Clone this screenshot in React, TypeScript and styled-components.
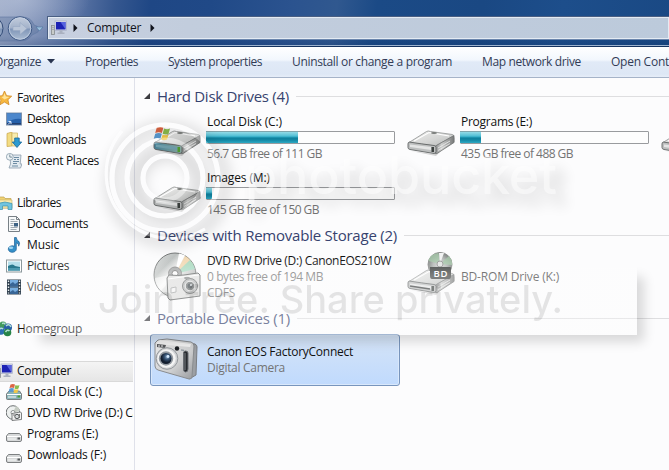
import React, { useLayoutEffect, useRef, useState } from 'react';
import styled, { createGlobalStyle } from 'styled-components';

const Global = createGlobalStyle`
  * { box-sizing: border-box; }
  html, body { margin: 0; padding: 0; overflow: hidden; }
  body { font: 12px/16px "Open Sans", "Noto Sans", sans-serif; color: #111; background: #fcfcfd; }
  svg { display: block; flex: none; }
`;

const Screen = styled.div`
  position: relative;
  width: 669px;
  height: 470px;
  overflow: hidden;
  display: flex;
  flex-direction: column;
  background: #fcfcfd;
`;

const TextBox = styled.span<{ $w: number }>`
  display: block;
  flex: none;
  width: ${p => p.$w}px;
  white-space: nowrap;
`;
const TextRun = styled.span`
  display: inline-block;
  white-space: nowrap;
`;

/* Single-line label whose tracking is adjusted to fill a given width. */
function Label({ text, w }: { text: string; w: number }) {
  const ref = useRef<HTMLSpanElement>(null);
  const [tracking, setTracking] = useState(0);
  useLayoutEffect(() => {
    if (ref.current) {
      const natural = ref.current.getBoundingClientRect().width;
      setTracking((w - natural) / text.length);
    }
  }, [text, w]);
  return (
    <TextBox $w={w}>
      <TextRun ref={ref} style={{ letterSpacing: tracking }}>{text}</TextRun>
    </TextBox>
  );
}

/* ---------- top chrome ---------- */
const Chrome = styled.header`
  flex: none;
  height: 46px;
  padding-top: 16px;
  display: flex;
  align-items: flex-start;
  border-bottom: 1px solid #9db3cf;
  background:
    radial-gradient(ellipse 70px 34px at 20px 0px, rgba(190, 200, 222, 0.55), transparent),
    linear-gradient(180deg, transparent 0 36px, rgba(10, 40, 90, 0.22) 46px),
    linear-gradient(97deg, #9aa8c5 0, #8193b8 35px, #5c75a5 75px, #35578f 115px, #1f4785 150px, #204987 210px, #2b538f 290px, #30588f 335px, #1b4a86 375px, #1a4883 480px, #1d4e8b 560px, #1a4984 100%);
`;
const NavSlot = styled.div`
  width: 47px;
  height: 26px;
  flex: none;
`;
const AddressBar = styled.div`
  flex: 1;
  height: 24px;
  display: flex;
  align-items: center;
  padding-left: 3px;
  border: 1px solid #4a5f83;
  border-bottom-color: #6b86ad;
  border-right: 0;
  box-shadow: inset 0 0 0 1px #e4ebf3;
  background: linear-gradient(90deg, #c8d0e0 0, #c2cddd 140px, #bccadb 100%);
`;
const Crumb = styled.div`
  display: flex;
  align-items: center;
  gap: 9px;
  margin-left: 6px;
  color: #10131c;
`;

const Toolbar = styled.nav`
  flex: none;
  height: 32px;
  display: flex;
  align-items: center;
  gap: 30px;
  padding-bottom: 1px;
  color: #323c56;
  border-top: 1px solid #14325f;
  border-bottom: 1px solid #a5b3c8;
  background: linear-gradient(180deg, #ffffff 0, #f2f7fd 13px, #e1eaf7 15px, #dde7f5 27px, #e6edf8 100%);
`;
const Command = styled.div`
  display: flex;
  align-items: center;
  gap: 6px;
  flex: none;
  &:first-child { margin-left: -6px; }
`;

/* ---------- body ---------- */
const Body = styled.div`
  flex: 1;
  min-height: 0;
  display: flex;
`;
const Sidebar = styled.aside`
  flex: none;
  width: 135px;
  padding-top: 10px;
  overflow: hidden;
  border-right: 1px solid #dfe1ea;
`;
const NavRow = styled.div<{ $level: number; $active?: boolean }>`
  height: 21px;
  width: 133px;
  overflow: hidden;
  display: flex;
  align-items: center;
  gap: ${p => (p.$level ? 5 : 4)}px;
  padding-left: ${p => (p.$level ? 6 : 0)}px;
  padding-bottom: 2px;
  ${p => (p.$level ? '' : 'svg { margin-left: -3px; }')}
  ${p => p.$active && 'background: linear-gradient(#f5f5f5, #e5e5e5); box-shadow: inset 0 1px #d9d9d9, inset 0 -1px #d9d9d9;'}
`;
const Gap = styled.div`height: 21px;`;

const Content = styled.main`
  flex: 1;
  min-width: 0;
  padding: 4px 0 0 9px;
  overflow: hidden;
`;
const GroupHeader = styled.h2<{ $h: number }>`
  margin: 0;
  height: ${p => p.$h}px;
  padding-bottom: 2px;
  display: flex;
  align-items: center;
  gap: 7px;
  font-size: 15px;
  line-height: 20px;
  font-weight: 400;
  color: #37436f;
`;
const Rule = styled.div`
  flex: 1;
  height: 1px;
  margin-top: 1px;
  background: #dedee0;
`;
const Tiles = styled.div`
  display: grid;
  grid-template-columns: repeat(3, 250px);
  grid-auto-rows: 52px;
  gap: 4px;
  padding-left: 6px;
`;
const TileBox = styled.div<{ $selected?: boolean }>`
  display: flex;
  align-items: center;
  border: 1px solid ${p => (p.$selected ? '#7895bd' : 'transparent')};
  border-radius: 3px;
  ${p => p.$selected && 'background: linear-gradient(#d5e4f7, #c0dafd); box-shadow: inset 0 0 0 1px #d9e8fb;'}
`;
const IconSlot = styled.div`
  width: 55px;
  padding-left: 1px;
  flex: none;
`;
const TileText = styled.div<{ $muted?: boolean }>`
  padding-left: 1px;
  color: ${p => (p.$muted ? '#444' : '#111')};
`;
const Detail = styled.div`color: #747474;`;
const Meter = styled.div`
  width: 189px;
  height: 13px;
  margin: 1px 0 2px -1px;
  border: 1px solid #999b9e;
  border-radius: 1px;
  background: #fdfdfd;
`;
const MeterFill = styled.div`
  height: 12px;
  margin: -1px 0 0 -1px;
  border-top: 1px solid #7fa5ad;
  background: linear-gradient(180deg, #93dae6 0, #52bfd5 4px, #2ba6c1 5px, #0f809c 6px, #1388a5 8px, #2da9c4 100%);
`;

/* ---------- watermark ---------- */
const WatermarkPanel = styled.div`
  position: absolute;
  left: 24px;
  top: 258px;
  width: 613px;
  height: 77px;
  background: linear-gradient(180deg, rgba(253, 253, 253, 0), rgba(253, 253, 253, 0.33) 18px);
  pointer-events: none;
`;
const WatermarkArt = styled.svg`
  position: absolute;
  left: 0;
  top: 0;
  pointer-events: none;
`;

/* ---------- icons ---------- */
const Triangle = ({ down }: { down?: boolean }) => down
  ? <svg width="8" height="5"><path d="M0 0h8L4 4.5z" fill="#28344f" /></svg>
  : <svg width="5" height="8"><path d="M.5 0 4.5 4l-4 4z" fill="#10131c" /></svg>;

const GroupArrow = () => <svg width="6" height="6"><path d="M6 0v6H0z" fill="#3b3b40" /></svg>;

const NavButtons = () => (
  <svg width="47" height="26" viewBox="0 0 47 26">
    <defs>
      <linearGradient id="nb" x1="0" y1="0" x2="0" y2="1">
        <stop offset="0" stopColor="#c3cddd" /><stop offset=".48" stopColor="#a3b2ca" />
        <stop offset=".52" stopColor="#7f95b7" /><stop offset="1" stopColor="#aebfd5" />
      </linearGradient>
    </defs>
    <path d="M0 1h22q9 0 12 8 7 2 4 7-4 2-6 3-4 6-11 6H0" fill="rgba(80,105,150,.3)" stroke="#5d77a1" strokeOpacity=".6" />
    <circle cx="-9" cy="12.500" r="12" fill="url(#nb)" stroke="#344d78" />
    <circle cx="20" cy="12.500" r="11.800" fill="url(#nb)" stroke="#405a86" />
    <circle cx="20" cy="12.500" r="10.700" fill="none" stroke="#c3d0e2" strokeOpacity=".8" />
    <path d="M13 10.500h7V6.500l7 6-7 6v-4h-7z" fill="#b9c5d7" stroke="#97a8c2" strokeWidth=".6" />
    <path d="M36 11h7l-3.500 4z" fill="#9cc0dd" stroke="#4b739f" strokeWidth=".6" />
  </svg>
);

const Monitor = () => (
  <svg width="16" height="16" viewBox="0 0 16 16">
    <rect x=".5" y="5.500" width="3" height="9" fill="#c7cbc9" stroke="#858b8d" strokeWidth=".8" />
    <path d="M1.500 7.500h1M1.500 9.500h1" stroke="#687480" strokeWidth=".7" />
    <rect x="4" y="1" width="11.500" height="9.500" fill="#dde1ee" stroke="#a5adc5" strokeWidth=".7" />
    <rect x="5" y="2" width="9.500" height="7.500" fill="#1c22b4" />
    <path d="M9.500 2h5v7.500z" fill="#5663df" />
    <path d="M8.500 10.500h3v2h2v1.500h-7v-1.500h2z" fill="#aab1c0" />
  </svg>
);

const Star = () => (
  <svg width="16" height="16" viewBox="0 0 16 16">
    <path d="m7.500 1 2.100 4.700 5.100.5-3.800 3.500 1.100 5-4.500-2.600L3 14.700l1-5L.2 6.200l5.200-.5z" fill="#f7b840" stroke="#cf8a27" strokeWidth=".8" />
    <path d="m7.500 3 1.300 3.500 3.700.5-5 2.500-3-2.500 2-.5z" fill="#ffe49a" />
  </svg>
);

const Desktop = () => (
  <svg width="16" height="16" viewBox="0 0 16 16">
    <rect x=".5" y="2" width="15" height="12" fill="#255fa9" stroke="#7e91ab" />
    <path d="M1 2.500h14V8Q7 7 1 12z" fill="#4c87cc" />
    <path d="M1 12h14v1.500H1z" fill="#213f70" />
    <path d="M2 13.500 4.500 11M2.500 10.500h2.500V13" stroke="#dceaff" fill="none" />
  </svg>
);

const Downloads = () => (
  <svg width="16" height="16" viewBox="0 0 16 16">
    <path d="M1 1.500 6 0v14l-5 .5z" fill="#f3dc83" stroke="#c7a449" strokeWidth=".7" />
    <path d="M6 1h5.500v13H6z" fill="#f8ecad" stroke="#cbb364" strokeWidth=".7" />
    <path d="M8.700 6h4.500v4h2.500L11 15.500 6.300 10h2.400z" fill="#2c9ad0" stroke="#17679b" strokeWidth=".8" />
  </svg>
);

const Recent = () => (
  <svg width="16" height="16" viewBox="0 0 16 16">
    <path d="M4 2h11l-.8 9H16l-1.500 4H3l1.500-4z" fill="#e2eaf0" stroke="#8d9dac" strokeWidth=".8" />
    <path d="M8 4.500h5M8 6.500h2m1 0h2M7 8.500h6M7 10.500h4M6 13h6" stroke="#6d8ba3" />
    <circle cx="3.800" cy="3.800" r="3.400" fill="#eef3f6" stroke="#889baa" strokeWidth=".8" />
    <path d="M3.800 1.500v2.600H6" fill="none" stroke="#5e7687" strokeWidth=".8" />
  </svg>
);

const Libraries = () => (
  <svg width="16" height="16" viewBox="0 0 16 16">
    <path d="M1 3.500V2h6l1 1.500h6V13H1z" fill="#f0d273" stroke="#bea250" strokeWidth=".7" />
    <path d="M2 5h13v8H2z" fill="#fbebae" stroke="#c6b16d" strokeWidth=".6" />
    <path d="M1.500 8.500q6-3 13.500 0v6h-4V11H5.500v3.500h-4z" fill="#70c4df" stroke="#3b91ab" strokeWidth=".7" />
  </svg>
);

const DocumentIcon = () => (
  <svg width="16" height="16" viewBox="0 0 16 16">
    <path d="M2.500.5h8l3 3v12h-11z" fill="#f7f9fa" stroke="#788086" />
    <path d="M10.500.5v3h3" fill="none" stroke="#788086" />
    <path d="M4.500 3.500h4M4.500 5.500h7M4.500 7.500h3m-3 2h3m-3 2h7m-7 2h6" stroke="#8b989f" strokeWidth=".8" />
    <rect x="8" y="7" width="4" height="3.500" fill="#3e6384" />
  </svg>
);

const Music = () => (
  <svg width="16" height="16" viewBox="0 0 16 16">
    <path d="M8.500.5h1.800q0 2.300 2.200 3.500 2 1.800.2 5.200.2-3-2.400-3.400V12a4 3.300 0 1 1-1.800-2.700z" fill="#348fc8" stroke="#1e6095" strokeWidth=".7" />
    <ellipse cx="5" cy="10.800" rx="2.200" ry="1.300" fill="#9ed5f2" />
  </svg>
);

const Pictures = () => (
  <svg width="16" height="16" viewBox="0 0 16 16">
    <rect x=".5" y="2" width="15" height="12" fill="#fff" stroke="#8c989c" />
    <path d="M2 3.500h12v9H2z" fill="#b5dfeb" />
    <path d="M2 8q5-3 7 0l5 1v3.500H2z" fill="#28788d" />
    <path d="M2 10h12v2.500H2z" fill="#4c9ab0" />
  </svg>
);

const Videos = () => (
  <svg width="16" height="16" viewBox="0 0 16 16">
    <path d="M1 .5h14v15H1z" fill="#30404f" />
    <path d="M4 1h8v6.500H4zM4 8.500h8V15H4z" fill="#78aee0" />
    <path d="M4 5 7 3l2 2 3-2v4.500H4zm0 8 3-2 2 2 3-2v4H4z" fill="#386596" />
    <path d="M2.500 1.500v13m11-13v13" stroke="#e8edf0" strokeWidth="1.400" strokeDasharray="1.500 1.500" />
  </svg>
);

const Homegroup = () => (
  <svg width="16" height="16" viewBox="0 0 16 16">
    <circle cx="6" cy="4" r="3.500" fill="#439b5c" /><circle cx="11" cy="6.500" r="4" fill="#2860a6" />
    <circle cx="4" cy="10" r="3.800" fill="#2e70b3" /><circle cx="10.500" cy="11.500" r="3.800" fill="#278447" />
    <path d="M5 2.500q3-1 3 1M9 5q3-3 5 1M2 9q2-3 4-1m2.500 3q2-3 4-1" stroke="#b3e1d4" strokeWidth="1.400" fill="none" />
  </svg>
);

const WindowsFlag = ({ x, y, s }: { x: number; y: number; s: number }) => (
  <g transform={`translate(${x} ${y}) scale(${s})`}>
    <path d="M5 1q5-2 9 0l-2 7q-4-2-9 0z" fill="#dc6543" />
    <path d="M15 2q4 2 8 0l-2 7q-4 2-8 0z" fill="#8bbc4d" />
    <path d="M3 9q5-2 9 0l-2 7q-4-2-9 0z" fill="#5a9bd2" />
    <path d="M13 10q4 2 8 0l-2 7q-4 2-8 0z" fill="#f0c84b" />
  </g>
);

const SmallDrive = ({ windows }: { windows?: boolean }) => (
  <svg width="16" height="16" viewBox="0 0 16 16">
    <path d={windows ? 'M.5 10 3 7h10.500l2 3v4.500q0 1-1 1h-13q-1 0-1-1z' : 'M.5 10 2.500 7.500h11l2 2.500v4q0 1.500-1.500 1.500H2q-1.500 0-1.500-1.500z'} fill={windows ? '#89b3b7' : '#d7d9da'} stroke="#707476" strokeWidth=".9" />
    <path d="M1 10.500h14" stroke="#fff" /><path d="M2 13h8" stroke="#f4f5f5" strokeWidth="1.500" strokeOpacity=".7" />
    <rect x="11.500" y="11.500" width="2.500" height="2" fill={windows ? '#4c9e37' : '#55595b'} />
    {windows && <WindowsFlag x={2} y={0} s={0.5} />}
  </svg>
);

const SmallDisc = () => (
  <svg width="16" height="16" viewBox="0 0 16 16">
    <circle cx="7" cy="7.500" r="6.800" fill="#edf0ef" stroke="#6b6f71" />
    <path d="M7 7.500 10 1q3 1 4 5z" fill="#c5cbc3" /><circle cx="7" cy="7.500" r="2" fill="#fff" stroke="#8e9293" />
    <path d="M6 8.500 14.500 7l1 1v6.500L6 15.500z" fill="#f0f0f0" stroke="#606365" strokeWidth=".8" />
    <circle cx="11" cy="11.500" r="2.200" fill="#d6d9da" stroke="#55595b" /><path d="M7 10h2m4.500-1v4" stroke="#777" />
  </svg>
);

const Drive = ({ variant }: { variant?: 'windows' | 'bd' }) => {
  const tinted = variant === 'windows';
  return (
    <svg width="52" height="50" viewBox="0 0 52 50">
      <defs>
        <linearGradient id="driveTop" x1="0" y1="0" x2="1" y2="1">
          <stop stopColor="#eeeeed" /><stop offset=".55" stopColor="#d5d6d5" /><stop offset="1" stopColor="#b6b8b7" />
        </linearGradient>
        <linearGradient id="driveSide" x1="0" y1="0" x2="1" y2="0">
          <stop stopColor="#8c8e8e" /><stop offset=".35" stopColor="#cdcecd" /><stop offset="1" stopColor="#777979" />
        </linearGradient>
        <linearGradient id="driveTeal" x1="0" y1="0" x2="1" y2="0">
          <stop stopColor="#4c8aa3" /><stop offset="1" stopColor="#94b7ad" />
        </linearGradient>
        <radialGradient id="bdDisc"><stop stopColor="#d7d8d8" /><stop offset=".55" stopColor="#b6bab8" /><stop offset="1" stopColor="#828684" /></radialGradient>
      </defs>
      <path d="M5 38 28 41 49 29v-5L30 43z" fill="#777" opacity=".3" />
      <path d="M3 29.500 20.500 18.500q1.500-1 4 0l22 3q2 .4 0 2L29.500 33z" fill="url(#driveTop)" stroke="#929494" strokeWidth=".8" />
      <path d="M29.500 33 48 22.500V29.500L31 40.500q-2 .8-2-.8z" fill="url(#driveSide)" stroke="#717373" strokeWidth=".8" />
      <path d="M3 29q13 2 25 3.500 2 .2 2 2v4q0 2-2 2L4 36.500q-2-.4-2-2V31q0-1.500 1-2z" fill={tinted ? 'url(#driveTeal)' : '#bdbfbf'} stroke="#626565" strokeWidth=".9" />
      <path d="M4 31.500 25 34v3L4 34z" fill={tinted ? '#78aab8' : '#e4e5e5'} />
      <path d="m8 28 15-8.500 20 3.500" stroke="#fff" fill="none" strokeWidth="1.100" />
      <rect x="25.500" y="34" width="2.500" height="5" fill={tinted ? '#55a735' : '#3d4240'} />
      <path d="m32 35 12-7M32 37.500l12-7" stroke="#eee" strokeWidth=".8" />
      <ellipse cx="28" cy="20" rx="3" ry="1" fill="#797c7a" />
      {tinted && <WindowsFlag x={1} y={14} s={0.74} />}
      {variant === 'bd' && (
        <g>
          <path d="M4 34 24 37" stroke="#3c3f3f" strokeWidth="1.500" />
          <circle cx="34" cy="12.500" r="12" fill="url(#bdDisc)" stroke="#8b8d8c" />
          <path d="M34 12 22.500 9q1-7 10-8zM34 12 43 4q4 4 3 9z" fill="#a6c8aa" opacity=".8" />
          <path d="M34 12 33 1h5z" fill="#f1f2f2" /><circle cx="34" cy="12" r="3" fill="#e2e4e3" stroke="#999" />
          <path d="M24 15h20q1 0 1 1v8q0 3-2 3H26q-2 0-2-3z" fill="#3f4241" />
          <text x="27.500" y="24.500" fill="#fff" fontFamily="Open Sans" fontSize="9.500" fontWeight="600" textLength="14">BD</text>
        </g>
      )}
    </svg>
  );
};

const DiscCamera = () => (
  <svg width="52" height="50" viewBox="0 0 52 50">
    <defs>
      <linearGradient id="disc" x1="0" y1="0" x2="1" y2="1">
        <stop stopColor="#e1e3e2" /><stop offset=".28" stopColor="#bfc3c2" /><stop offset=".46" stopColor="#f6f6f5" />
        <stop offset=".7" stopColor="#bfc2c1" /><stop offset="1" stopColor="#e8e8e8" />
      </linearGradient>
    </defs>
    <ellipse cx="23" cy="23" rx="21" ry="22" fill="url(#disc)" stroke="#777a7a" />
    <path d="M23 22 33 4q5 2 8 9z" fill="#f1d3a6" opacity=".8" /><path d="M23 22 38 8q4 4 5 9z" fill="#a6dcc2" opacity=".9" />
    <path d="M23 22 27 1.500 33 3z" fill="#fff" /><path d="M23 22 3 26q0 7 6 13z" fill="#fff" opacity=".6" />
    <circle cx="23" cy="21.500" r="6.500" fill="#a7a9a9" stroke="#888" /><circle cx="23" cy="21.500" r="3" fill="#fbfbfb" stroke="#777" />
    <path d="m15 26 2-3q10 1 15 0l14-2 2 2v21l-30 4-2-2z" fill="#e0e0df" stroke="#5f6262" />
    <path d="M16 27 30 25l17-2" stroke="#fff" fill="none" />
    <path d="m19 36 5-1v5l-5 1z" fill="#f3f3f3" stroke="#a5a7a7" />
    <circle cx="38" cy="34" r="7.500" fill="#b5b7b7" stroke="#6a6d6d" /><circle cx="38" cy="34" r="4.800" fill="#6f7474" stroke="#f0f0f0" />
    <circle cx="38" cy="34" r="2.500" fill="#3e464b" /><circle cx="39" cy="33" r="1" fill="#dce3e6" />
    <ellipse cx="35" cy="26" rx="3" ry="1.200" fill="#858888" />
  </svg>
);

const Camera = () => (
  <svg width="52" height="50" viewBox="0 0 52 50">
    <defs>
      <linearGradient id="cam" x1="0" y1="0" x2="1" y2="1"><stop stopColor="#ececec" /><stop offset=".6" stopColor="#cecfd0" /><stop offset="1" stopColor="#999b9e" /></linearGradient>
      <radialGradient id="lens" cx=".6" cy=".35"><stop stopColor="#90b0cc" /><stop offset=".5" stopColor="#345071" /><stop offset="1" stopColor="#131e2f" /></radialGradient>
    </defs>
    <path d="m37 8 6 1q2 1 2 3l-1 28-7 4z" fill="#9c9fa3" stroke="#7b7e82" />
    <path d="m3 8 3-3 9-1 24 3q3 1 3 4l-2 31q0 2-3 2L6 35q-3-1-3-4z" fill="url(#cam)" stroke="#898c8f" />
    <path d="m5 7 3-2 31 4-1 3L5 9z" fill="#f1f1f1" />
    <path d="m5 9 9 1-1 3-8-1z" fill="#57595c" /><path d="M7 10v2m3-2v2" stroke="#eee" />
    <circle cx="25" cy="13.500" r="2.200" fill="#1c1f23" /><path d="m29 15 3 .3" stroke="#7c8790" />
    <circle cx="15" cy="23.500" r="10.800" fill="#d2d4d6" stroke="#94989c" />
    <circle cx="14.500" cy="23.500" r="9.200" fill="#f4f4f4" /><circle cx="14" cy="23.500" r="7.200" fill="#91989f" />
    <circle cx="14" cy="23.500" r="5.500" fill="url(#lens)" /><circle cx="16" cy="21.500" r="1.400" fill="#d6eaff" />
    <path d="M31.500 18q0-2 2-2 2.500 0 2.500 2v16q0 3-2.500 3-2 0-2-3z" fill="#292c30" stroke="#676b70" />
    <path d="M33 18v17" stroke="#7c8085" />
  </svg>
);

/* ---------- data ---------- */
const commands: [string, number][] = [
  ['Organize', 47], ['Properties', 53], ['System properties', 94],
  ['Uninstall or change a program', 160], ['Map network drive', 99], ['Open Control Panel', 105],
];

type Entry = { text: string; w: number; level: number; icon: React.ReactNode; active?: boolean } | null;
const entries: Entry[] = [
  { text: 'Favorites', w: 47, level: 0, icon: <Star /> },
  { text: 'Desktop', w: 43, level: 1, icon: <Desktop /> },
  { text: 'Downloads', w: 59, level: 1, icon: <Downloads /> },
  { text: 'Recent Places', w: 72, level: 1, icon: <Recent /> },
  null,
  { text: 'Libraries', w: 44, level: 0, icon: <Libraries /> },
  { text: 'Documents', w: 61, level: 1, icon: <DocumentIcon /> },
  { text: 'Music', w: 32, level: 1, icon: <Music /> },
  { text: 'Pictures', w: 42, level: 1, icon: <Pictures /> },
  { text: 'Videos', w: 35, level: 1, icon: <Videos /> },
  null,
  { text: 'Homegroup', w: 65, level: 0, icon: <Homegroup /> },
  null,
  { text: 'Computer', w: 54, level: 0, icon: <Monitor />, active: true },
  { text: 'Local Disk (C:)', w: 75, level: 1, icon: <SmallDrive windows /> },
  { text: 'DVD RW Drive (D:) CanonEOS210W', w: 185, level: 1, icon: <SmallDisc /> },
  { text: 'Programs (E:)', w: 71, level: 1, icon: <SmallDrive /> },
  { text: 'Downloads (F:)', w: 79, level: 1, icon: <SmallDrive /> },
];

type TileProps = {
  icon: React.ReactNode;
  title: [string, number];
  details?: [string, number][];
  used?: number;
  selected?: boolean;
  muted?: boolean;
};
const Tile = ({ icon, title, details = [], used, selected, muted }: TileProps) => (
  <TileBox $selected={selected}>
    <IconSlot>{icon}</IconSlot>
    <TileText $muted={muted}>
      <Label text={title[0]} w={title[1]} />
      {used !== undefined && <Meter><MeterFill style={{ width: used }} /></Meter>}
      {details.map(([t, w]) => <Detail key={t}><Label text={t} w={w} /></Detail>)}
    </TileText>
  </TileBox>
);

const Group = ({ title, w, h, children }: { title: string; w: number; h: number; children: React.ReactNode }) => (
  <section>
    <GroupHeader $h={h}><GroupArrow /><Label text={title} w={w} /><Rule /></GroupHeader>
    <Tiles>{children}</Tiles>
  </section>
);

const Rings = () => (
  <g fill="none">
    <path d="M122 131A65 65 0 0 0 205 229" strokeWidth="3" />
    <circle cx="165" cy="178" r="53" strokeWidth="5" />
    <circle cx="165" cy="178" r="38" strokeWidth="5" />
    <circle cx="165" cy="178" r="22" strokeWidth="5" />
  </g>
);

const Watermark = () => (
  <>
    <WatermarkPanel />
    <WatermarkArt width="669" height="470" viewBox="0 0 669 470">
      <defs>
        <filter id="soft" x="-20%" y="-20%" width="150%" height="160%"><feGaussianBlur stdDeviation="7" /></filter>
        <clipPath id="outsidePanel"><path clipRule="evenodd" d="M0 0H669V470H0ZM24 240H637V335H24Z" /></clipPath>
        <filter id="edge" x="-10%" y="-40%" width="120%" height="180%"><feGaussianBlur stdDeviation="6" /></filter>
        <mask id="ringCutout" maskUnits="userSpaceOnUse" x="0" y="0" width="669" height="470">
          <rect width="669" height="470" fill="#fff" />
          <g stroke="#000"><Rings /></g>
        </mask>
      </defs>
      <g clipPath="url(#outsidePanel)">
        <rect x="40" y="277" width="604" height="65" fill="#000" opacity=".14" filter="url(#edge)" />
      </g>
      <g mask="url(#ringCutout)">
        <g filter="url(#soft)" opacity=".12" fill="none" stroke="#000">
          <circle cx="168" cy="184" r="57" strokeWidth="12" />
          <circle cx="168" cy="184" r="32" strokeWidth="18" />
        </g>
      </g>
      <g filter="url(#soft)" opacity=".1" fill="#000">
        <text x="250" y="205" textLength="318" fontFamily="Inter" fontSize="55" fontWeight="700">photobucket</text>
      </g>
      <g stroke="#fff" opacity=".3"><Rings /></g>
      <text x="245" y="194" textLength="312" fill="#fff" opacity=".5" fontFamily="Inter" fontSize="52" fontWeight="500">photobucket</text>
      <text x="98" y="313" textLength="465" fill="#000" opacity=".095" fontFamily="Inter" fontSize="38" fontWeight="500">Join free. Share privately.</text>
    </WatermarkArt>
  </>
);

export default function App() {
  return (
    <Screen>
      <Global />
      <Chrome>
        <NavSlot><NavButtons /></NavSlot>
        <AddressBar>
          <Monitor />
          <Crumb><Triangle /><Label text="Computer" w={54} /><Triangle /></Crumb>
        </AddressBar>
      </Chrome>
      <Toolbar>
        {commands.map(([text, w], i) => (
          <Command key={text}><Label text={text} w={w} />{i === 0 && <Triangle down />}</Command>
        ))}
      </Toolbar>
      <Body>
        <Sidebar>
          {entries.map((e, i) => e
            ? <NavRow key={i} $level={e.level} $active={e.active}>{e.icon}<Label text={e.text} w={e.w} /></NavRow>
            : <Gap key={i} />)}
        </Sidebar>
        <Content>
          <Group title="Hard Disk Drives (4)" w={132} h={30}>
            <Tile icon={<Drive variant="windows" />} title={['Local Disk (C:)', 75]} used={92} details={[['56.7 GB free of 111 GB', 115]]} />
            <Tile icon={<Drive />} title={['Programs (E:)', 71]} used={21} details={[['435 GB free of 488 GB', 112]]} />
            <Tile icon={<Drive />} title={['Downloads (F:)', 79]} />
            <Tile icon={<Drive />} title={['Images (M:)', 63]} used={6} details={[['145 GB free of 150 GB', 112]]} />
          </Group>
          <Group title="Devices with Removable Storage (2)" w={240} h={31}>
            <Tile icon={<DiscCamera />} title={['DVD RW Drive (D:) CanonEOS210W', 184]} details={[['0 bytes free of 194 MB', 116], ['CDFS', 28]]} />
            <Tile icon={<Drive variant="bd" />} title={['BD-ROM Drive (K:)', 98]} muted />
          </Group>
          <Group title="Portable Devices (1)" w={133} h={31}>
            <Tile icon={<Camera />} title={['Canon EOS FactoryConnect', 146]} details={[['Digital Camera', 78]]} selected />
          </Group>
        </Content>
      </Body>
      <Watermark />
    </Screen>
  );
}
